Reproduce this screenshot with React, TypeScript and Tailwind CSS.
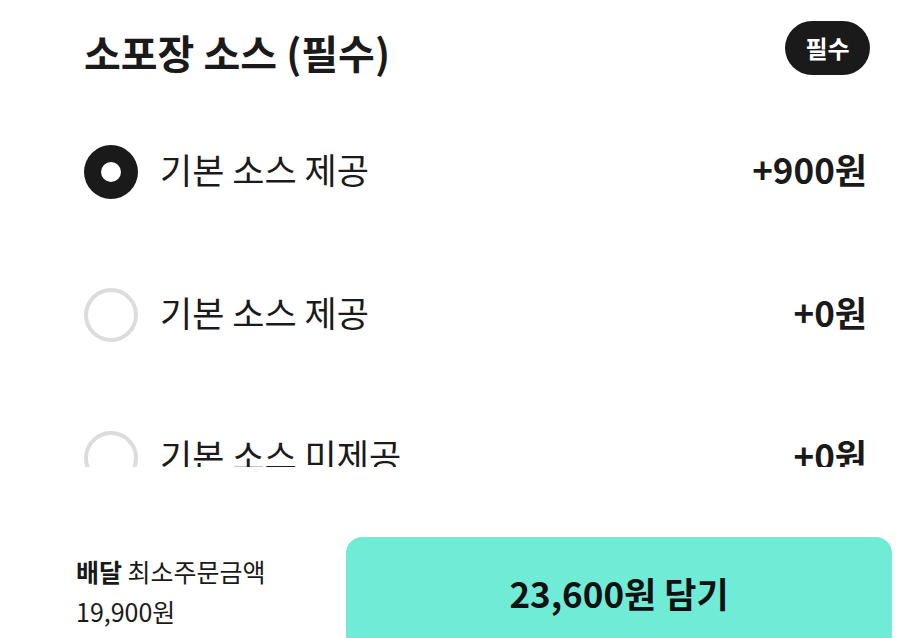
import { useState } from 'react';

const OPTIONS = [
  { label: '기본 소스 제공', price: '+900원' },
  { label: '기본 소스 제공', price: '+0원' },
  { label: '기본 소스 미제공', price: '+0원' },
];

const Radio = ({ checked }: { checked: boolean }) =>
  checked ? (
    <span className="flex h-[54px] w-[54px] shrink-0 items-center justify-center rounded-full bg-[#1a1a1a]">
      <span className="h-[20px] w-[20px] rounded-full bg-white" />
    </span>
  ) : (
    <span className="h-[54px] w-[54px] shrink-0 rounded-full border-[4px] border-[#dcdcdc]" />
  );

export default function App() {
  const [selected, setSelected] = useState(0);

  return (
    <div
      className="flex h-[638px] w-full flex-col overflow-hidden bg-white text-[#1a1a1a]"
      style={{ fontFamily: '"Noto Sans CJK KR", "Noto Sans", sans-serif' }}
    >
      <div className="h-[467px] shrink-0 overflow-hidden">
        <div className="flex h-[100px] items-center justify-between pl-[84px] pr-[49px]">
          <h2 className="mt-[4px] text-[40px] font-bold leading-none">소포장 소스 (필수)</h2>
          <span className="mt-[-4px] flex h-[54px] w-[85px] items-center justify-center rounded-full bg-[#1a1a1a] text-[24px] font-bold text-white">
            필수
          </span>
        </div>

        {OPTIONS.map((opt, i) => (
          <button
            key={i}
            onClick={() => setSelected(i)}
            className="flex h-[143px] w-full items-center pl-[84px] pr-[52px] text-left"
          >
            <Radio checked={selected === i} />
            <span className="ml-[22px] mt-[-6px] flex-1 text-[35px] leading-none">{opt.label}</span>
            <span className="mt-[-6px] text-[35px] font-bold leading-none">{opt.price}</span>
          </button>
        ))}
      </div>

      <div className="flex flex-1 items-start pt-[70px] pr-[27px]">
        <div className="w-[346px] shrink-0 pl-[76px] pt-[14px]">
          <p className="text-[25px] leading-[40px]">
            <span className="font-bold">배달</span> 최소주문금액
          </p>
          <p className="text-[25px] leading-[40px]">19,900원</p>
        </div>
        <button className="flex h-[120px] flex-1 items-start justify-center rounded-[16px] bg-[#70ebd6] pt-[38px] text-[35px] font-bold leading-none text-[#111]">
          23,600원 담기
        </button>
      </div>
    </div>
  );
}
